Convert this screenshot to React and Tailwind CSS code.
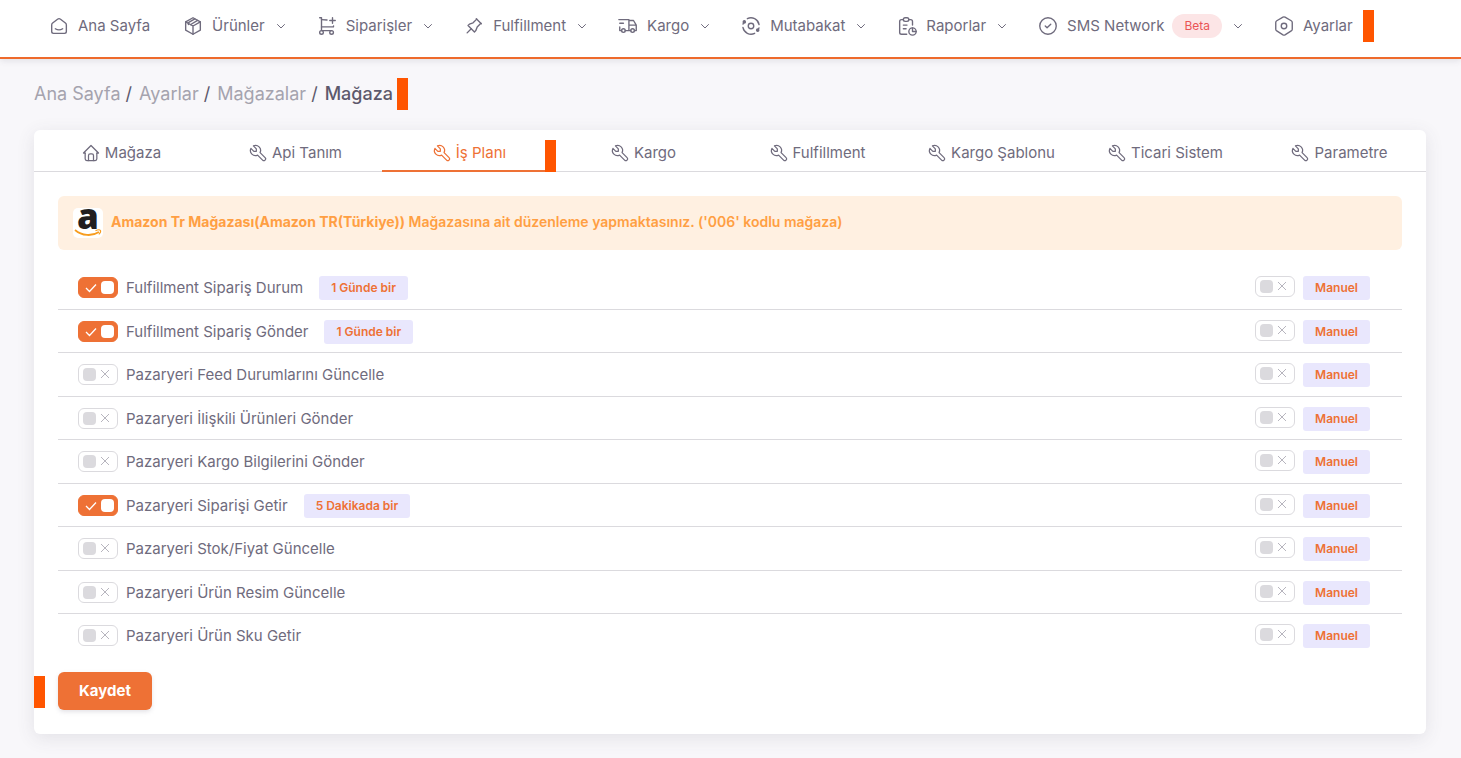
import { useState } from 'react';
import { clsx } from 'clsx';

const NAV = [
  { icon: 'home', label: 'Ana Sayfa' },
  { icon: 'box', label: 'Ürünler', menu: true },
  { icon: 'cart', label: 'Siparişler', menu: true },
  { icon: 'pin', label: 'Fulfillment', menu: true },
  { icon: 'truck', label: 'Kargo', menu: true },
  { icon: 'sync', label: 'Mutabakat', menu: true },
  { icon: 'report', label: 'Raporlar', menu: true },
  { icon: 'check', label: 'SMS Network', menu: true, badge: 'Beta' },
  { icon: 'nut', label: 'Ayarlar' },
];

const TABS = ['Mağaza', 'Api Tanım', 'İş Planı', 'Kargo', 'Fulfillment', 'Kargo Şablonu', 'Ticari Sistem', 'Parametre'];

const JOBS = [
  { name: 'Fulfillment Sipariş Durum', on: true, every: '1 Günde bir' },
  { name: 'Fulfillment Sipariş Gönder', on: true, every: '1 Günde bir' },
  { name: 'Pazaryeri Feed Durumlarını Güncelle' },
  { name: 'Pazaryeri İlişkili Ürünleri Gönder' },
  { name: 'Pazaryeri Kargo Bilgilerini Gönder' },
  { name: 'Pazaryeri Siparişi Getir', on: true, every: '5 Dakikada bir' },
  { name: 'Pazaryeri Stok/Fiyat Güncelle' },
  { name: 'Pazaryeri Ürün Resim Güncelle' },
  { name: 'Pazaryeri Ürün Sku Getir' },
];

const ICONS = {
  home: (
    <>
      <path d="M19 8.71l-5.333 -4.148a2.666 2.666 0 0 0 -3.274 0l-5.334 4.148a2.665 2.665 0 0 0 -1.029 2.105v7.2a2 2 0 0 0 2 2h12a2 2 0 0 0 2 -2v-7.2c0 -.823 -.38 -1.6 -1.03 -2.105" />
      <path d="M16 15c-2.21 1.333 -5.792 1.333 -8 0" />
    </>
  ),
  box: (
    <>
      <path d="M12 3l8 4.5v9l-8 4.5l-8 -4.5v-9z" />
      <path d="M12 12l8 -4.5M12 12v9M12 12l-8 -4.5" />
      <path d="M14 4.2l-7 4.2v2M17 5.9l-7.500 4.500" />
    </>
  ),
  cart: (
    <>
      <circle cx="6" cy="19" r="2" />
      <circle cx="17" cy="19" r="2" />
      <path d="M17 17h-11v-14h-2" />
      <path d="M6 5l6.005 .429m7.138 6.573l-.143 .998h-13" />
      <path d="M15 6h6m-3 -3v6" />
    </>
  ),
  pin: (
    <>
      <path d="M15 4.5l-4 4l-4 1.5l-1.5 1.5l7 7l1.5 -1.5l1.5 -4l4 -4" />
      <path d="M9 15l-4.5 4.5M14.5 4l5.5 5.5" />
    </>
  ),
  truck: (
    <>
      <circle cx="7" cy="17" r="2" />
      <circle cx="17" cy="17" r="2" />
      <path d="M5 17h-2v-4m-1 -8h11v12m-4 0h6m4 0h2v-6h-8m0 -5h5l3 5" />
      <path d="M3 9h4" />
    </>
  ),
  sync: (
    <>
      <circle cx="12" cy="12" r="3" />
      <path d="M8 4a9 9 0 0 1 12.8 6.500M16 20a9 9 0 0 1 -12.8 -6.500" />
      <path d="M3.300 10a9 9 0 0 1 1.500 -3M20.700 14a9 9 0 0 1 -1.500 3" />
      <circle cx="4.700" cy="7.500" r="1.200" fill="currentColor" />
      <circle cx="19.300" cy="16.500" r="1.200" fill="currentColor" />
    </>
  ),
  report: (
    <>
      <path d="M8 5h-2a2 2 0 0 0 -2 2v12a2 2 0 0 0 2 2h5.697" />
      <path d="M18 14v4h4M18 11v-4a2 2 0 0 0 -2 -2h-2" />
      <rect x="8" y="3" width="6" height="4" rx="2" />
      <circle cx="18" cy="18" r="4" />
      <path d="M8 11h4M8 15h3" />
    </>
  ),
  check: (
    <>
      <circle cx="12" cy="12" r="9" />
      <path d="M9 12l2 2l4 -4" />
    </>
  ),
  nut: (
    <>
      <path d="M19.9 6.3c.7 .4 1.1 1.1 1.1 1.9v7.3c0 .8 -.4 1.5 -1.1 1.9l-6.8 4.3a2.3 2.3 0 0 1 -2.2 0l-6.8 -4.3a2.2 2.2 0 0 1 -1.1 -1.9v-7.3c0 -.8 .4 -1.5 1.1 -1.9l6.8 -4a2.3 2.3 0 0 1 2.2 0z" />
      <circle cx="12" cy="12" r="3" />
    </>
  ),
  store: (
    <>
      <path d="M5 12h-2l9 -9l9 9h-2" />
      <path d="M5 12v7a2 2 0 0 0 2 2h10a2 2 0 0 0 2 -2v-7" />
      <path d="M9 21v-6a2 2 0 0 1 2 -2h2a2 2 0 0 1 2 2v6" />
    </>
  ),
  tool: <path d="M7 10h3v-3l-3.5 -3.5a6 6 0 0 1 8 8l6 6a2 2 0 0 1 -3 3l-6 -6a6 6 0 0 1 -8 -8l3.5 3.5" />,
  chevron: <path d="M5 9l7 7l7 -7" strokeWidth="2" />,
};

function Icon({ name, className }) {
  return (
    <svg viewBox="0 0 24 24" fill="none" stroke="currentColor" strokeWidth="1.5" strokeLinecap="round" strokeLinejoin="round" className={clsx('shrink-0', className)} aria-hidden="true">
      {ICONS[name]}
    </svg>
  );
}

function Marker({ className }) {
  return <span className={clsx('h-8 w-[11px] bg-[#ff5500]', className)} aria-hidden="true" />;
}

function Badge({ children }) {
  return <span className="h-6 rounded-[3px] bg-[#e9e7fd] px-3 text-xs leading-6 font-semibold text-[#ee7135]">{children}</span>;
}

function Toggle({ id, label, defaultOn = false }) {
  const [on, setOn] = useState(defaultOn);
  return (
    <label htmlFor={id} className="cursor-pointer">
      <input id={id} type="checkbox" className="sr-only" aria-label={label} checked={on} onChange={() => setOn(!on)} />
      <span className={clsx('flex h-[21px] w-10 items-center rounded-md border', on ? 'justify-end gap-1 border-[#ee7135] bg-[#ee7135] px-[3px] text-white' : 'gap-1 border-[#dbdade] bg-white px-1 text-[#b7b5be]')}>
        {on && (
          <svg viewBox="0 0 12 12" className="size-3" fill="none" stroke="currentColor" strokeWidth="1.3" aria-hidden="true">
            <path d="M1 6l3.5 3.5L11 2.5" />
          </svg>
        )}
        <span className={clsx('size-[13px] rounded', on ? 'bg-white' : 'bg-[#dbdade]')} />
        {!on && (
          <svg viewBox="0 0 10 10" className="mb-0.5 size-[10px]" fill="none" stroke="currentColor" aria-hidden="true">
            <path d="M1 1l8 8M9 1l-8 8" />
          </svg>
        )}
      </span>
    </label>
  );
}

function AmazonLogo() {
  return (
    <svg viewBox="0 0 30 30" className="size-[30px] shrink-0 overflow-visible" role="img" aria-label="Amazon">
      <rect width="30" height="30" rx="5" fill="#fff" />
      <text x="15" y="21" textAnchor="middle" fontFamily="Open Sans, sans-serif" fontWeight="800" fontSize="35" fill="#221f1f">a</text>
      <path d="M2 22c7 6 17 6.500 24 2" fill="none" stroke="#f79c1e" strokeWidth="1.8" />
      <path d="M22.5 22.7c2 -.9 4.5 -.8 5 -.2c.3 .7 -.4 2.7 -1.7 3.9" fill="none" stroke="#f79c1e" strokeWidth="1.1" />
    </svg>
  );
}

function Navbar() {
  return (
    <header className="h-[59px] border-b-2 border-[#ee6a2c] bg-white shadow-[0_2px_6px_rgba(75,70,92,0.12)]">
      <nav className="flex h-[52px] items-center gap-7 pl-12">
        {NAV.map((item) => (
          <a key={item.label} href="#" className={clsx('flex items-center whitespace-nowrap', !item.menu && 'mr-1')}>
            <Icon name={item.icon} className="size-[22px]" />
            <span className="ml-2">{item.label}</span>
            {item.badge && <span className="ml-2 h-6 rounded-full bg-[#fce5e6] px-3 text-xs leading-6 text-[#ea5455]">{item.badge}</span>}
            {item.menu && <Icon name="chevron" className="mr-px ml-2.5 size-3" />}
            {item.label === 'Ayarlar' && <Marker className="ml-2.5" />}
          </a>
        ))}
      </nav>
    </header>
  );
}

function Crumbs() {
  return (
    <nav aria-label="breadcrumb" className="flex h-8 items-center text-lg text-[#5d596c]">
      {['Ana Sayfa', 'Ayarlar', 'Mağazalar'].map((c) => (
        <span key={c} className="mr-[7px]">
          <a href="#" className="text-[#a5a3ae]">{c}</a> /
        </span>
      ))}
      <span className="font-medium">Mağaza</span>
      <Marker className="ml-1" />
    </nav>
  );
}

export default function App() {
  const [tab, setTab] = useState('İş Planı');
  return (
    <div className="min-h-screen bg-[#f8f7fa] font-[Inter,sans-serif] text-[15px] leading-[22px] text-[#6f6b7d]">
      <Navbar />
      <main className="pt-[19px] pr-[35px] pb-6 pl-[34px]">
        <Crumbs />
        <section className="mt-5 rounded-md bg-white shadow-[0_4px_18px_rgba(75,70,92,0.12)]">
          <div role="tablist" className="grid grid-cols-8 border-b border-[#dbdade]">
            {TABS.map((t) => (
              <button
                key={t}
                type="button"
                role="tab"
                aria-selected={t === tab}
                onClick={() => setTab(t)}
                className={clsx('relative -mb-px flex h-[42px] items-center justify-center gap-1 border-b-2 pt-1.5 whitespace-nowrap', t === tab ? 'border-[#ee7135] text-[#ee7135]' : 'border-transparent')}
              >
                <Icon name={t === 'Mağaza' ? 'store' : 'tool'} className="size-5" />
                {t}
                {t === tab && <Marker className="absolute right-0 -bottom-0.5" />}
              </button>
            ))}
          </div>
          <div className="p-6">
            <div role="alert" className="flex h-[54px] gap-2 rounded-md bg-[#fff0e1] px-[15px] pt-3 text-[#ff9f43]">
              <AmazonLogo />
              <p className="pt-[3px] text-sm leading-[22px] font-semibold">
                <strong className="font-bold">Amazon Tr Mağazası(Amazon TR(Türkiye))</strong> Mağazasına ait düzenleme yapmaktasınız. ('006' kodlu mağaza)
              </p>
            </div>
            <ul className="mt-4">
              {JOBS.map((job, i) => (
                <li key={job.name} className="flex items-start border-b border-[#dbdade] pt-2.5 pr-8 pl-5 last:border-b-0 odd:h-11 even:h-[43px]">
                  <div className="flex items-start gap-2 leading-6">
                    <div className="pt-px">
                      <Toggle id={`job-${i}`} label={job.name} defaultOn={job.on} />
                    </div>
                    <span className="mr-2">{job.name}</span>
                    {job.every && <Badge>{job.every}</Badge>}
                  </div>
                  <div className="ml-auto flex items-start gap-2">
                    <Toggle id={`manual-${i}`} label={`${job.name} manuel`} />
                    <Badge>Manuel</Badge>
                  </div>
                </li>
              ))}
            </ul>
            <div className="mt-3.5 flex">
              <Marker className="mt-1 mr-[13px] -ml-6" />
              <button type="button" className="h-[38px] rounded-md bg-[#ee7135] px-[21px] font-bold text-white shadow-[0_2px_4px_rgba(165,163,174,0.3)]">Kaydet</button>
            </div>
          </div>
        </section>
      </main>
    </div>
  );
}
